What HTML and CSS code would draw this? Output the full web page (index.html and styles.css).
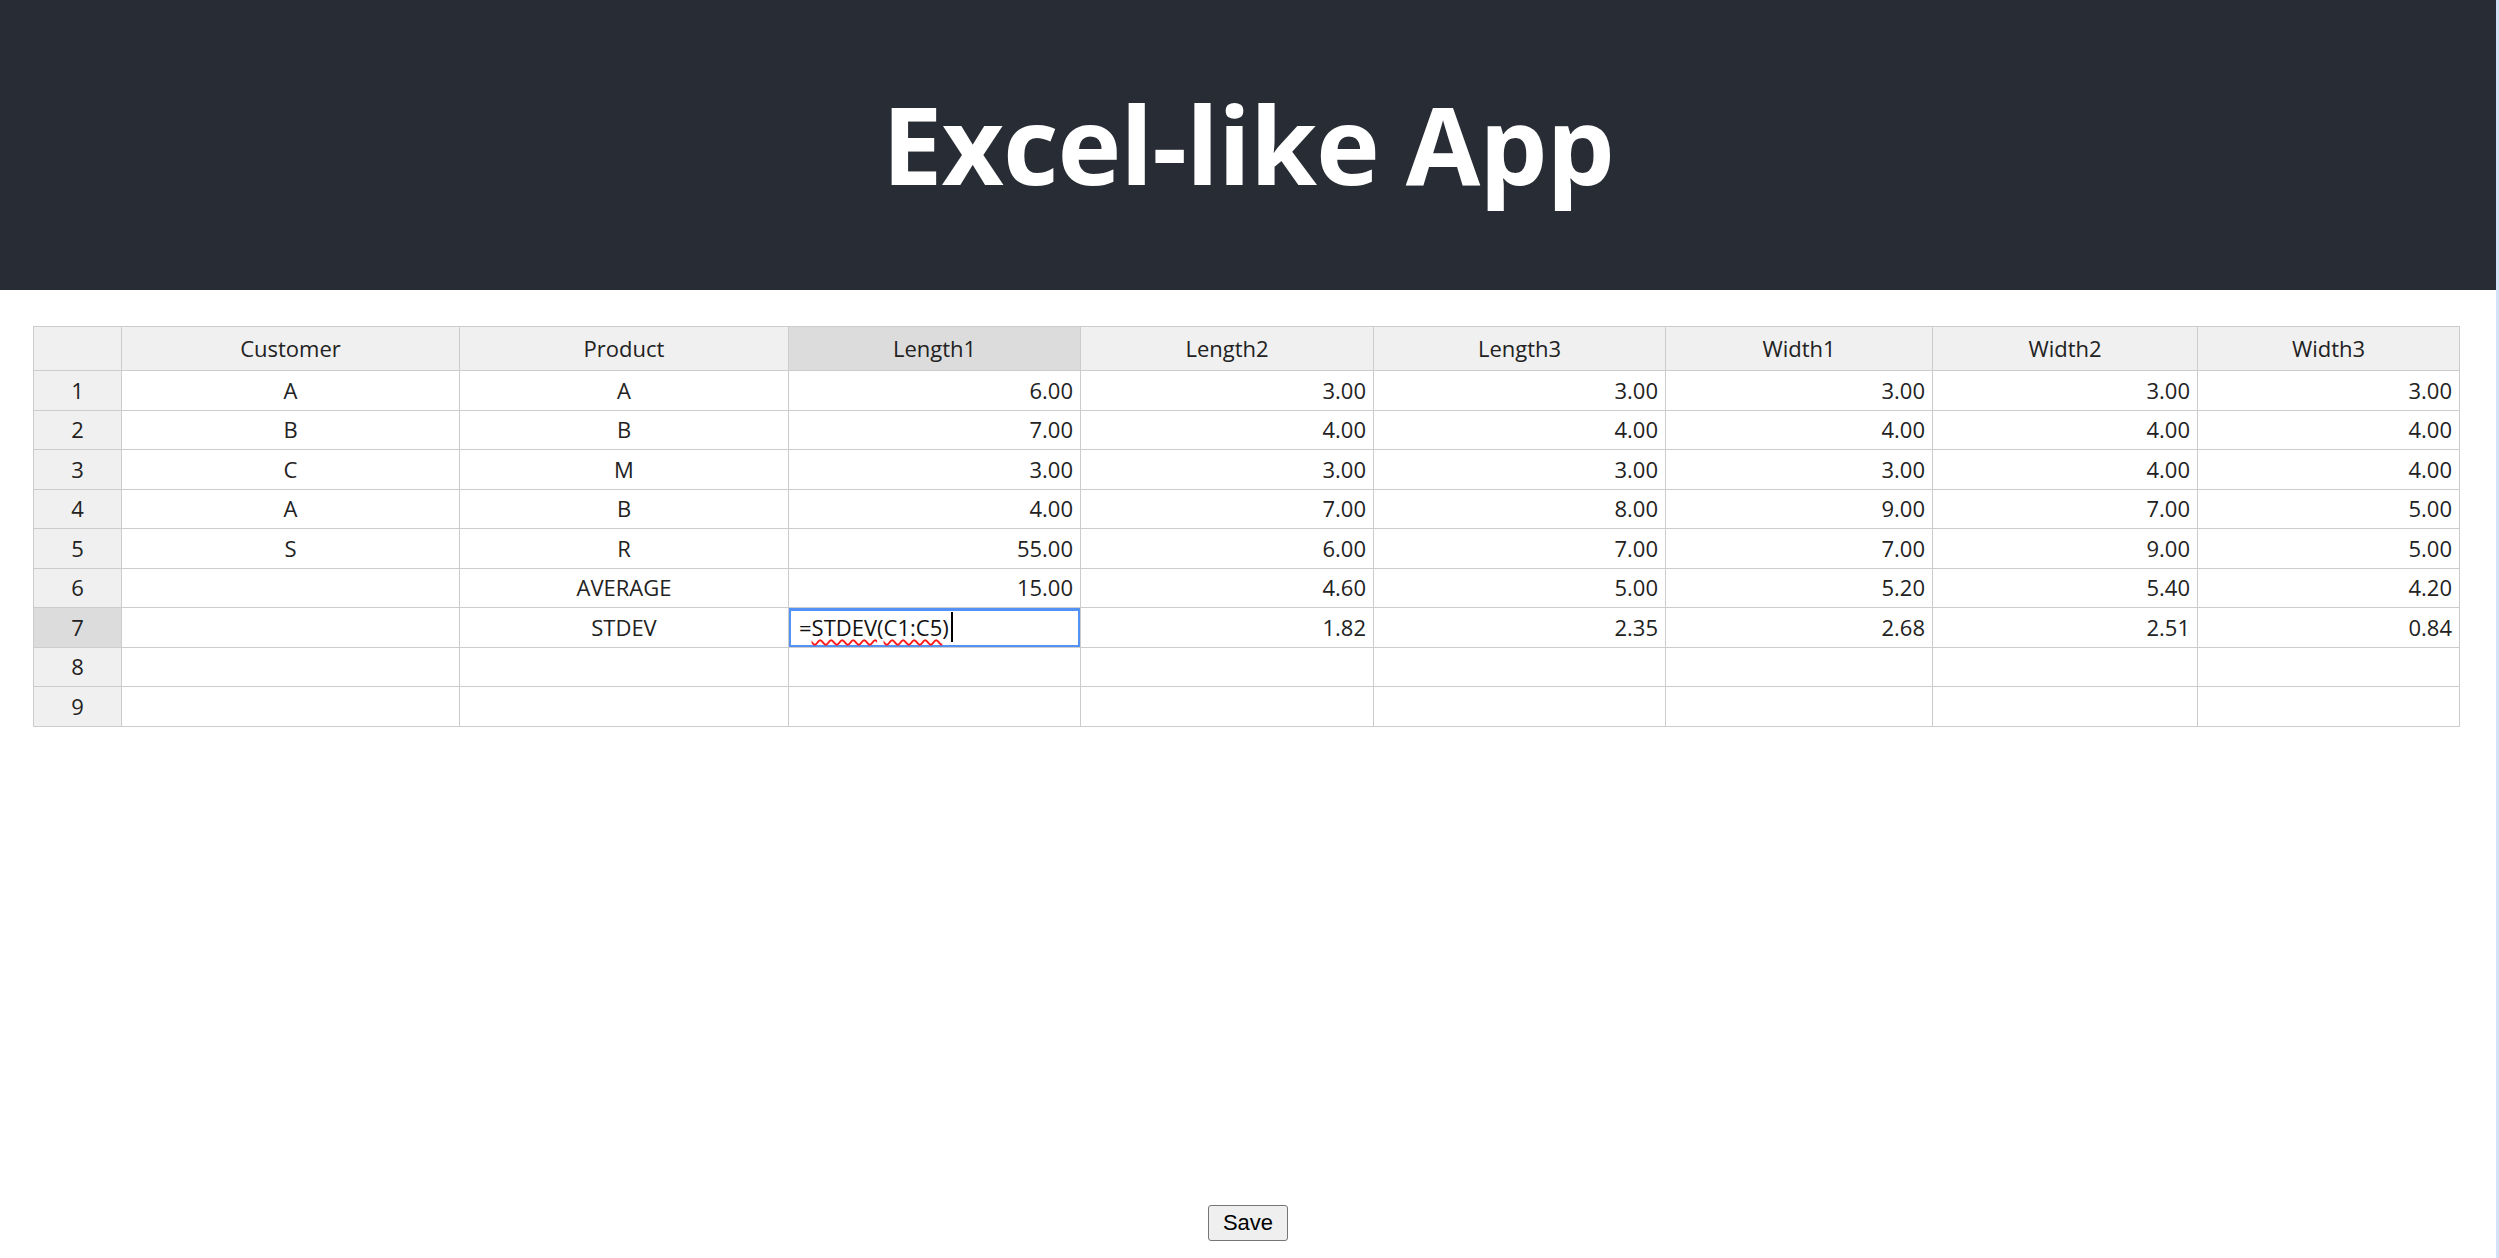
FILE: index.html
```html
<!DOCTYPE html>
<html lang="en">
<head>
<meta charset="utf-8">
<title>Excel-like App</title>
<link rel="stylesheet" href="styles.css">
</head>
<body>
<div class="app">
  <header class="app-header">
    <h1 class="app-title">Excel-like App</h1>
  </header>
  <main class="content">
    <div class="sheet">
      <table class="grid">
        <colgroup>
          <col class="c-rh"><col class="c-cust"><col class="c-prod"><col class="c-l1"><col class="c-l2"><col class="c-l3"><col class="c-w1"><col class="c-w2"><col class="c-w3">
        </colgroup>
        <thead>
          <tr>
            <th class="corner"></th>
            <th>Customer</th>
            <th>Product</th>
            <th class="hl">Length1</th>
            <th>Length2</th>
            <th>Length3</th>
            <th>Width1</th>
            <th>Width2</th>
            <th>Width3</th>
          </tr>
        </thead>
        <tbody>
          <tr><th>1</th><td class="ctr">A</td><td class="ctr">A</td><td>6.00</td><td>3.00</td><td>3.00</td><td>3.00</td><td>3.00</td><td>3.00</td></tr>
          <tr><th>2</th><td class="ctr">B</td><td class="ctr">B</td><td>7.00</td><td>4.00</td><td>4.00</td><td>4.00</td><td>4.00</td><td>4.00</td></tr>
          <tr><th>3</th><td class="ctr">C</td><td class="ctr">M</td><td>3.00</td><td>3.00</td><td>3.00</td><td>3.00</td><td>4.00</td><td>4.00</td></tr>
          <tr><th>4</th><td class="ctr">A</td><td class="ctr">B</td><td>4.00</td><td>7.00</td><td>8.00</td><td>9.00</td><td>7.00</td><td>5.00</td></tr>
          <tr><th>5</th><td class="ctr">S</td><td class="ctr">R</td><td>55.00</td><td>6.00</td><td>7.00</td><td>7.00</td><td>9.00</td><td>5.00</td></tr>
          <tr><th>6</th><td class="ctr"></td><td class="ctr">AVERAGE</td><td>15.00</td><td>4.60</td><td>5.00</td><td>5.20</td><td>5.40</td><td>4.20</td></tr>
          <tr><th class="hl">7</th><td class="ctr"></td><td class="ctr">STDEV</td><td class="editing"><div class="editor">=<span class="spell">STDEV</span>(<span class="spell">C1:C5</span>)<span class="caret"></span></div></td><td>1.82</td><td>2.35</td><td>2.68</td><td>2.51</td><td>0.84</td></tr>
          <tr><th>8</th><td></td><td></td><td></td><td></td><td></td><td></td><td></td><td></td></tr>
          <tr><th>9</th><td></td><td></td><td></td><td></td><td></td><td></td><td></td><td></td></tr>
        </tbody>
      </table>
    </div>
    <div class="actions">
      <button class="save-btn" type="button">Save</button>
    </div>
  </main>
</div>
</body>
</html>
```

FILE: styles.css
```css
html, body {
  margin: 0;
  padding: 0;
  background: #ffffff;
}

.app {
  min-height: 1258px;
  box-sizing: border-box;
  border-right: 3px solid #d3e2f8;
  font-family: "Open Sans", "Noto Sans", sans-serif;
}

.app-header {
  height: 290px;
  background: #282c34;
  display: flex;
  align-items: center;
  justify-content: center;
}

.app-title {
  margin: 0;
  color: #ffffff;
  font-family: "Open Sans", "Noto Sans", sans-serif;
  font-weight: 700;
  font-size: 108px;
  line-height: 1;
  letter-spacing: -1px;
  padding-bottom: 2px;
}

.content {
  padding: 36px 0 0 33px;
}

.sheet {
  height: 879px;
}

.grid {
  border-collapse: collapse;
  table-layout: fixed;
  width: 2427px;
  font-size: 22px;
  color: #222222;
}

.c-rh { width: 88px; }
.c-cust { width: 338px; }
.c-prod { width: 329px; }
.c-l1 { width: 292px; }
.c-l2 { width: 293px; }
.c-l3 { width: 292px; }
.c-w1 { width: 267px; }
.c-w2 { width: 265px; }
.c-w3 { width: 262px; }

.grid th,
.grid td {
  border: 1px solid #cccccc;
  padding: 0 7px 2px 7px;
  white-space: nowrap;
  overflow: hidden;
  line-height: 1;
}

.grid thead tr {
  height: 44px;
}

.grid tbody tr:nth-child(odd) {
  height: 40px;
}

.grid tbody tr:nth-child(even) {
  height: 39px;
}

.grid th {
  background: #f0f0f0;
  font-weight: 400;
  text-align: center;
}

.grid th.hl {
  background: #dcdcdc;
}

.grid td {
  text-align: right;
  background: #ffffff;
}

.grid td.ctr {
  text-align: center;
}

.grid td.editing {
  position: relative;
  padding: 0;
}

.editor {
  position: absolute;
  left: -1px;
  top: 0;
  right: -1px;
  bottom: -1px;
  border: 3px solid #5292f7;
  background: #ffffff;
  text-align: left;
  padding: 0 0 2px 8px;
  display: flex;
  align-items: center;
  color: #111111;
}

.spell {
  text-decoration: underline wavy #ff1a1a;
  text-decoration-thickness: 2px;
  text-underline-offset: 3px;
}

.caret {
  display: inline-block;
  width: 2px;
  height: 30px;
  background: #000000;
  margin-left: 2px;
}

.actions {
  display: flex;
  justify-content: center;
  padding-right: 33px;
}

.save-btn {
  height: 36px;
  padding: 0 14px;
  font-family: "Liberation Sans", Arial, sans-serif;
  font-size: 22px;
  color: #000000;
  background: #efefef;
  border: 1px solid #767676;
  border-radius: 3px;
}
```
